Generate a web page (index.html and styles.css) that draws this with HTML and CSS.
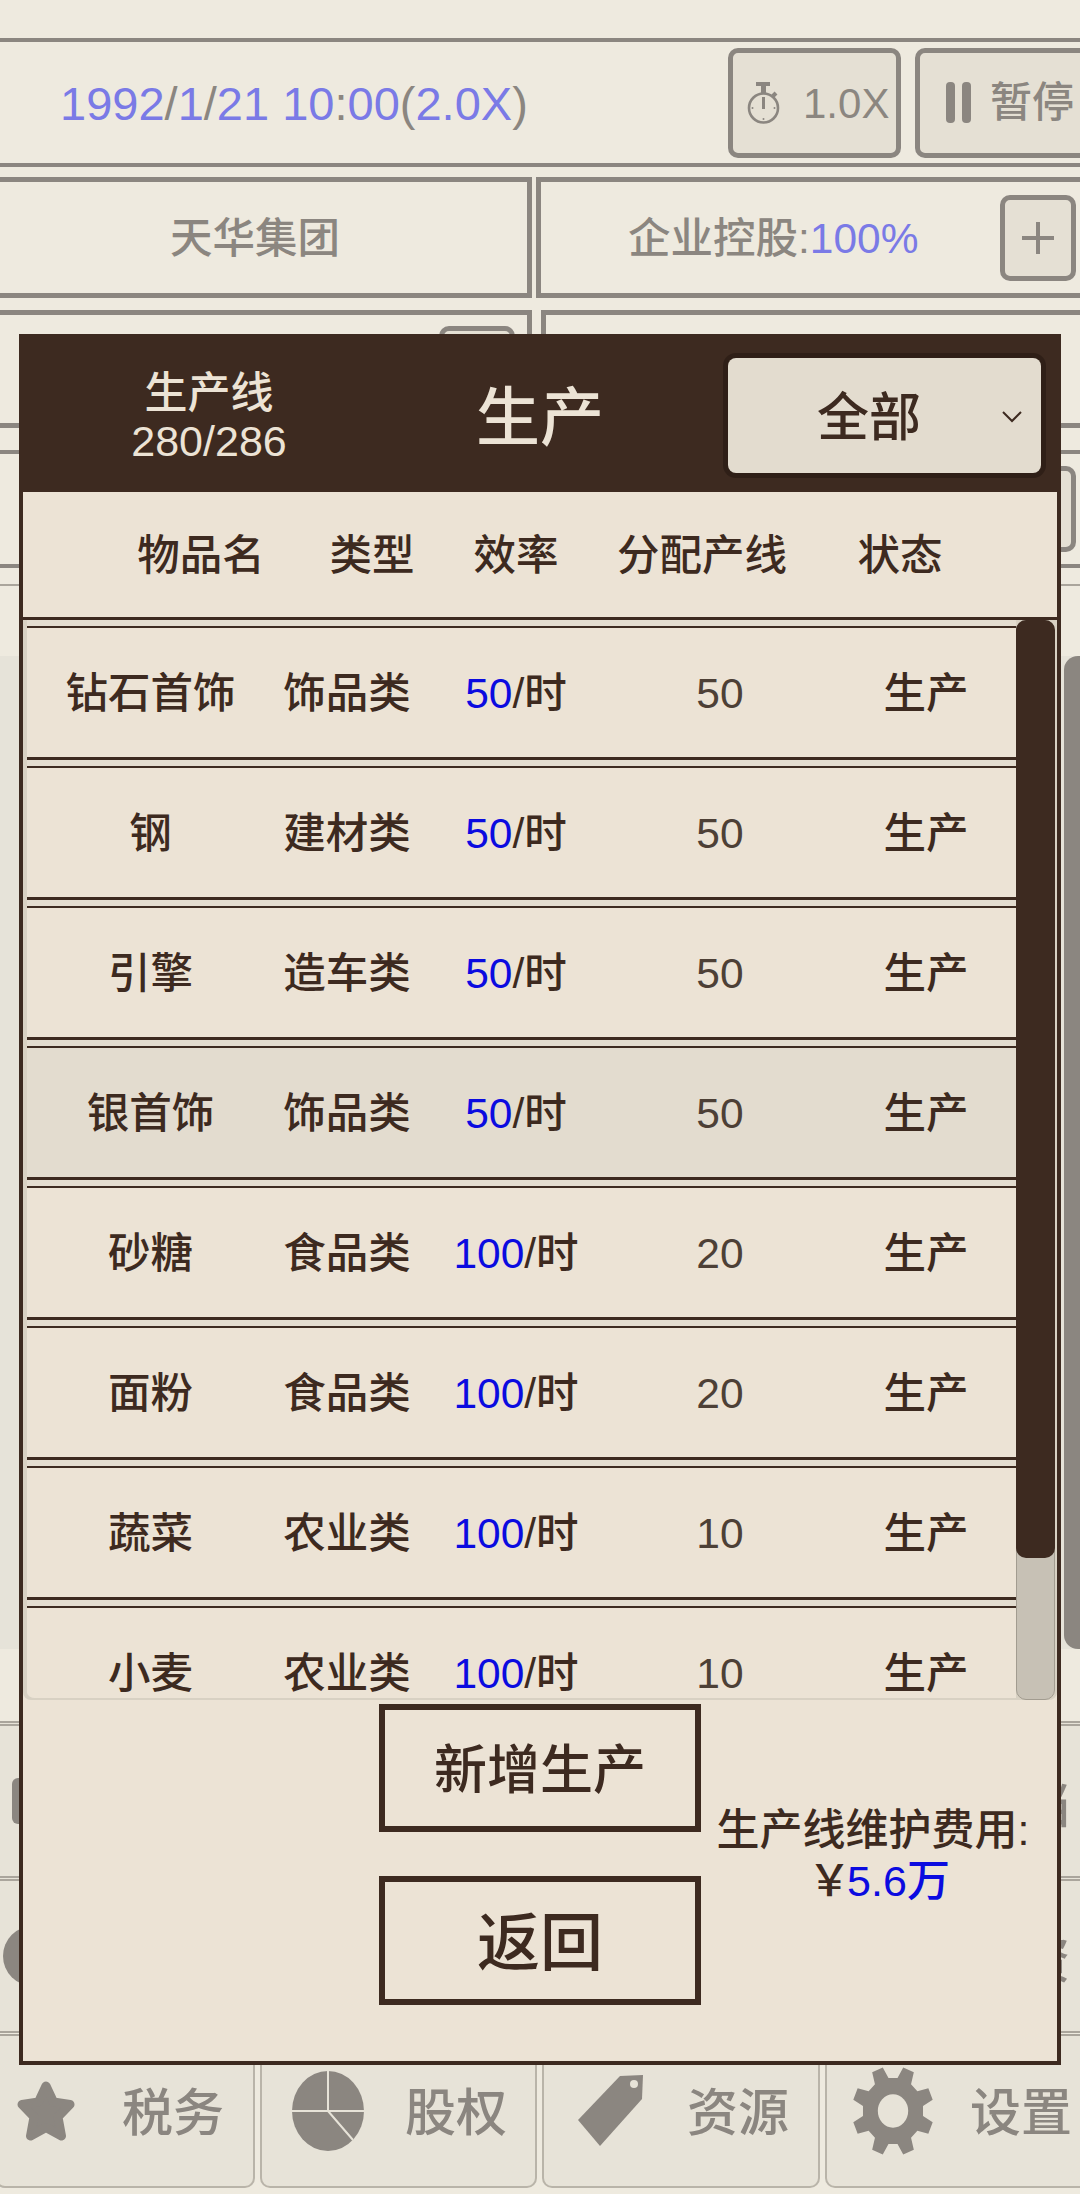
FILE: index.html
```html
<!DOCTYPE html>
<html lang="zh-CN">
<head>
  <meta charset="UTF-8" />
  <title>生产</title>
  <meta name="viewport" content="width=device-width, initial-scale=1.0" />
  <link rel="stylesheet" href="styles.css">
</head>
<body>
<div id="game">

  <!-- clock bar -->
  <div class="clock-bar">
    <div class="clock-text"><b>1992</b>/<b>1</b>/<b>21</b> <b>10</b>:<b>00</b>(<b>2.0X</b>)</div>
    <div class="tool-btn speed-btn">
      <svg class="watch" viewBox="0 0 33 42" fill="none" stroke="#8b8680">
        <path d="M9 2h14" stroke-width="4"/>
        <path d="M16.5 4v7" stroke-width="5"/>
        <path d="M26 14l3-3" stroke-width="4"/>
        <circle cx="16.5" cy="26" r="14.5" stroke-width="2.6"/>
        <path d="M16.5 15v12" stroke-width="3"/>
        <circle cx="16.5" cy="37" r="1" fill="#8b8680" stroke="none"/>
        <circle cx="5.5" cy="26" r="1" fill="#8b8680" stroke="none"/>
        <circle cx="27.5" cy="26" r="1" fill="#8b8680" stroke="none"/>
      </svg>
      <span>1.0X</span>
    </div>
    <div class="tool-btn pause-btn">
      <i class="pause-bar"></i><i class="pause-bar"></i>
      <span class="pause-label">暂停</span>
    </div>
  </div>

  <!-- company info -->
  <div class="info-row first">
    <div class="info-cell company"><span class="info-text">天华集团</span></div>
    <div class="info-cell holding">
      <span class="info-text holding-text">企业控股:<b>100%</b></span>
      <div class="plus-btn"></div>
    </div>
  </div>
  <div class="info-row second">
    <div class="info-cell cash"><div class="plus-btn small"></div></div>
    <div class="info-cell debt"></div>
  </div>
  <div class="info-row third">
    <div class="plus-btn edge"></div>
  </div>
  <div class="thin-line"></div>

  <div class="behind-list"><div class="behind-scroll"></div></div>

  <div class="menu-row row-a">
    <i class="menu-shape"></i>
    <span class="menu-label">档</span>
  </div>
  <div class="menu-row row-b">
    <i class="menu-round"></i>
    <span class="menu-label">资</span>
  </div>

  <!-- bottom tabs -->
  <div class="tabs">
    <div class="tab tab-tax">
      <svg class="tab-icon star" viewBox="0 0 60 64"><polygon points="30,6 37.5,22 54,24.5 42,37 45.5,56 30,47.5 14.5,56 18,37 6,24.5 22.5,22" fill="#8b8680" stroke="#8b8680" stroke-width="9" stroke-linejoin="round"/></svg>
      <span>税务</span>
    </div>
    <div class="tab tab-share">
      <svg class="tab-icon pie" viewBox="0 0 72 80">
        <ellipse cx="36" cy="40" rx="36" ry="40" fill="#8b8680"/>
        <path d="M36 0v40M0 40h72M36 40l25 29" stroke="#e7e3d8" stroke-width="2" fill="none"/>
      </svg>
      <span>股权</span>
    </div>
    <div class="tab tab-res">
      <svg class="tab-icon tag" viewBox="0 0 66 72">
        <polygon points="0,45 42,1 65,0 64,24 22,71" fill="#8b8680"/>
        <circle cx="56" cy="9" r="4" fill="#e7e3d8"/>
      </svg>
      <span>资源</span>
    </div>
    <div class="tab tab-set">
      <svg class="tab-icon gear" viewBox="0 0 100 100" preserveAspectRatio="none">
        <polygon fill="#8b8680" points="55.5,13.4 62.5,1.6 75.4,6.9 72,20.3 79.7,28 93.1,24.6 98.4,37.5 86.6,44.5 86.6,55.5 98.4,62.5 93.1,75.4 79.7,72 72,79.7 75.4,93.1 62.5,98.4 55.5,86.6 44.5,86.6 37.5,98.4 24.6,93.1 28,79.7 20.3,72 6.9,75.4 1.6,62.5 13.4,55.5 13.4,44.5 1.6,37.5 6.9,24.6 20.3,28 28,20.3 24.6,6.9 37.5,1.6 44.5,13.4"/>
        <circle cx="50" cy="50" r="18.5" fill="#e7e3d8"/>
      </svg>
      <span>设置</span>
    </div>
  </div>

  <!-- production dialog -->
  <div class="dialog">
    <div class="dialog-head">
      <div class="line-count">生产线<br>280/286</div>
      <div class="dialog-title">生产</div>
      <div class="filter">
        <span>全部</span>
        <svg class="chevron" viewBox="0 0 20 12" fill="none" stroke="#3d2a20" stroke-width="2"><path d="M1 1l9 9 9-9"/></svg>
      </div>
    </div>

    <div class="col-head">
      <span>物品名</span><span>类型</span><span>效率</span><span>分配产线</span><span>状态</span>
    </div>

    <div class="list">
      <div class="rows">
        <div class="row"><span>钻石首饰</span><span>饰品类</span><span><b>50</b>/时</span><span class="num">50</span><span class="state">生产</span></div>
        <div class="row"><span>钢</span><span>建材类</span><span><b>50</b>/时</span><span class="num">50</span><span class="state">生产</span></div>
        <div class="row"><span>引擎</span><span>造车类</span><span><b>50</b>/时</span><span class="num">50</span><span class="state">生产</span></div>
        <div class="row active"><span>银首饰</span><span>饰品类</span><span><b>50</b>/时</span><span class="num">50</span><span class="state">生产</span></div>
        <div class="row"><span>砂糖</span><span>食品类</span><span><b>100</b>/时</span><span class="num">20</span><span class="state">生产</span></div>
        <div class="row"><span>面粉</span><span>食品类</span><span><b>100</b>/时</span><span class="num">20</span><span class="state">生产</span></div>
        <div class="row"><span>蔬菜</span><span>农业类</span><span><b>100</b>/时</span><span class="num">10</span><span class="state">生产</span></div>
        <div class="row"><span>小麦</span><span>农业类</span><span><b>100</b>/时</span><span class="num">10</span><span class="state">生产</span></div>
      </div>
      <div class="track"><div class="thumb"></div></div>
    </div>

    <div class="dialog-foot">
      <div class="foot-btns">
        <div class="big-btn add">新增生产</div>
        <div class="big-btn back">返回</div>
      </div>
      <div class="upkeep">生产线维护费用:<div class="upkeep-cost"><span class="yen">￥</span><b>5.6万</b></div></div>
    </div>
  </div>
</div>
</body>
</html>
```

FILE: styles.css
```css
* { box-sizing: border-box; margin: 0; padding: 0 }
html, body {
  width: 100%; height: 100%;
  overflow: hidden;
  background: #eeeadf;
  font-family: 'Liberation Sans', 'Noto Sans CJK SC', sans-serif;
  font-weight: 500;
  color: #8b8680;
}
b { font-weight: inherit }

#game {
  position: relative;
  width: 1080px; height: 2194px;
  overflow: hidden;
  padding-top: 38px;
}

/*---- clock bar ----*/
.clock-bar {
  display: flex; align-items: center;
  height: 129px;
  padding-left: 60px;
  border-top: 4px solid #8b8680;
  border-bottom: 4px solid #8b8680;
}
.clock-text { width: 668px; flex: none; padding-top: 2px; font-size: 47px; line-height: 56px; white-space: pre }
.clock-text b { color: #7a7ae6 }
.tool-btn {
  display: flex; align-items: center;
  flex: none;
  height: 110px;
  background: #e5e0d4;
  border: 5px solid #8b8680;
  border-radius: 10px;
  font-size: 42px;
  line-height: 50px;
}
.speed-btn { width: 173px; padding-left: 14px }
.speed-btn span { margin-left: 23px; padding-top: 2px }
.watch { width: 33px; height: 42px; flex: none }
.pause-btn { width: 175px; margin-left: 14px; padding-left: 26px }
.pause-bar {
  width: 9px; height: 41px;
  margin-right: 7px;
  background: #8b8680;
  border-radius: 4px;
}
.pause-label { margin-left: 12px; white-space: nowrap }

/*---- info rows ----*/
.info-row { display: flex; margin-left: -6px; width: 1095px }
.info-row.first { margin-top: 10px; height: 121px; gap: 4px }
.info-row.second { margin-top: 12px; height: 118px; gap: 9px }
.info-row.third {
  margin-top: 22px; height: 118px;
  justify-content: flex-end;
  align-items: center;
  padding-right: 13px;
  border-top: 4px solid #8b8680;
  border-bottom: 4px solid #8b8680;
}
.info-cell {
  display: flex; align-items: center;
  border: 5px solid #8b8680;
  font-size: 42.5px;
  line-height: 50px;
}
.info-text { padding-top: 2px }
.company, .cash { width: 538px }
.company { padding-left: 171px }
.holding { flex: 1; padding-left: 87px }
.holding-text { width: 372px; white-space: nowrap }
.holding-text b { color: #7a7ae6 }
.plus-btn {
  position: relative;
  width: 76px; height: 86px;
  flex: none;
  background: #e5e0d4;
  border: 5px solid #8b8680;
  border-radius: 10px;
}
.plus-btn::before, .plus-btn::after {
  content: '';
  position: absolute; top: 50%; left: 50%;
  background: #8b8680;
}
.plus-btn::before { width: 32px; height: 4px; margin: -2px 0 0 -16px }
.plus-btn::after { width: 4px; height: 32px; margin: -16px 0 0 -2px }
.cash { justify-content: flex-end; padding-right: 12px }
.debt { flex: 1 }
.plus-btn.edge { width: 80px }

.thin-line { height: 2px; margin-top: 16px; background: #aaa59c }

/*---- what sits behind the dialog ----*/
.behind-list {
  position: relative;
  height: 993px;
  margin-top: 70px;
  background: #e6e3d9;
}
.behind-scroll {
  position: absolute; top: 0; right: 0;
  width: 16px; height: 100%;
  background: #8b8680;
  border-radius: 14px 0 0 14px;
}
.menu-row {
  display: flex; align-items: center; justify-content: space-between;
  padding-right: 10px;
  background: #e7e3d8;
  border-top: 5px double #aaa59c;
}
.row-a { margin-top: 72px; height: 155px }
.row-b { height: 155px }
.menu-label { font-size: 50px }
.menu-shape {
  width: 30px; height: 46px;
  margin-left: 12px;
  background: #8b8680;
  border-radius: 6px;
}
.menu-round {
  width: 60px; height: 60px;
  margin-left: 3px;
  background: #8b8680;
  border-radius: 50%;
}

/*---- bottom tabs ----*/
.tabs {
  display: flex; gap: 5px;
  height: 157px;
  width: 1110px;
  margin-left: -5px;
  background: #eeeadf;
  border-top: 5px double #aaa59c;
}
.tab {
  position: relative;
  height: 152px;
  background: #e7e3d8;
  border: 2px solid #b9b4a9;
  border-top: 0;
  border-radius: 0 0 10px 10px;
  font-size: 51px;
  line-height: 60px;
}
.tab span { position: absolute; top: 48px; white-space: nowrap }
.tab-icon { position: absolute; display: block }
.tab-tax { width: 260px }
.tab-share { width: 277px }
.tab-res { width: 278px }
.tab-set { flex: 1 }
.tab-tax span { left: 125px }
.tab-share span { left: 143px }
.tab-res span { left: 143px }
.tab-set span { left: 143px }
.star { left: 19px; top: 44px; width: 60px; height: 64px }
.pie { left: 30px; top: 35px; width: 72px; height: 80px }
.tag { left: 34px; top: 39px; width: 66px; height: 72px }
.gear { left: 25px; top: 30px; width: 82px; height: 90px }

/*---- production dialog ----*/
.dialog {
  position: absolute; left: 19px; top: 334px;
  width: 1042px; height: 1731px;
  display: flex; flex-direction: column;
  background: #ece3d5;
  border: 4px solid #3d2a20;
  color: #3d2a20;
}
.dialog-head {
  display: grid; grid-template-columns: 372px 290px 1fr;
  align-items: center;
  height: 154px;
  flex: none;
  background: #3d2a20;
  color: #ece3d5;
  text-align: center;
}
.line-count { font-size: 43px; line-height: 48px; margin-top: 4px }
.dialog-title { padding-top: 6px; font-size: 64px; line-height: 70px }
.filter {
  position: relative;
  display: flex; align-items: center;
  justify-self: end;
  width: 313px; height: 115px;
  margin-right: 16px;
  padding-left: 89px;
  background: #e3dccf;
  border-radius: 8px;
  box-shadow: 0 0 0 5px #2f1f17;
  color: #3d2a20;
  font-size: 52px;
  line-height: 60px;
}
.filter span { padding-top: 6px }
.chevron { position: absolute; right: 19px; top: 53px; width: 20px; height: 12px }

.col-head {
  display: grid; grid-template-columns: 172px 170px 118px 254px 142px;
  align-items: center;
  height: 128px;
  flex: none;
  padding: 2px 0 0 92px;
  border-bottom: 3px solid #3d2a20;
  font-size: 42.5px;
  line-height: 50px;
  text-align: center;
}

.list {
  display: flex;
  height: 1080px;
  flex: none;
  padding-left: 4px;
  background: #d8d1c3;
  border-radius: 0 0 8px 8px;
  overflow: hidden;
}
.rows {
  display: flex; flex-direction: column; gap: 6px;
  width: 989px;
  flex: none;
  padding-top: 6px;
  overflow: hidden;
  background: #e3dccf;
  border-bottom: 2px solid #d8d1c3;
  border-bottom-left-radius: 8px;
}
.row {
  display: grid; grid-template-columns: 247px 146px 192px 216px 188px;
  align-items: center;
  height: 134px;
  flex: none;
  padding-top: 2px;
  background: #ece3d5;
  border-top: 2px solid #3d2a20;
  border-bottom: 3px solid #3d2a20;
  font-size: 42.5px;
  line-height: 50px;
  text-align: center;
}
.row.active { background: #e3dccf }
.row b { color: #0b0be0 }
.row .num { color: #4d4036 }
.row .state { padding-left: 8px }
.track {
  position: relative;
  width: 39px; height: 100%;
  flex: none;
  background: #c7c1b5;
  border: 1px solid #a29c90;
  border-radius: 10px;
}
.thumb {
  position: absolute; top: -1px; left: -1px; right: -1px;
  height: 938px;
  background: #3d2a20;
  border-radius: 10px;
}

.dialog-foot {
  display: grid; grid-template-columns: 356px 322px 1fr;
  flex: 1;
  align-items: center;
}
.foot-btns {
  grid-column: 2;
  display: flex; flex-direction: column; gap: 44px;
  align-self: start;
  padding-top: 4px;
}
.big-btn {
  display: flex; align-items: center; justify-content: center;
  height: 129px;
  border: 6px solid #3d2a20;
}
.add { padding-top: 5px; font-size: 53px; height: 128px; line-height: 64px }
.back { padding-top: 5px; font-size: 63px; line-height: 70px }
.upkeep {
  padding-right: 12px;
  margin-bottom: 50px;
  font-size: 43px;
  line-height: 51px;
  text-align: center;
  white-space: nowrap;
}
.upkeep-cost { padding-left: 12px }
.yen { margin-right: -4px }
.upkeep b { color: #0b0be0 }
```
